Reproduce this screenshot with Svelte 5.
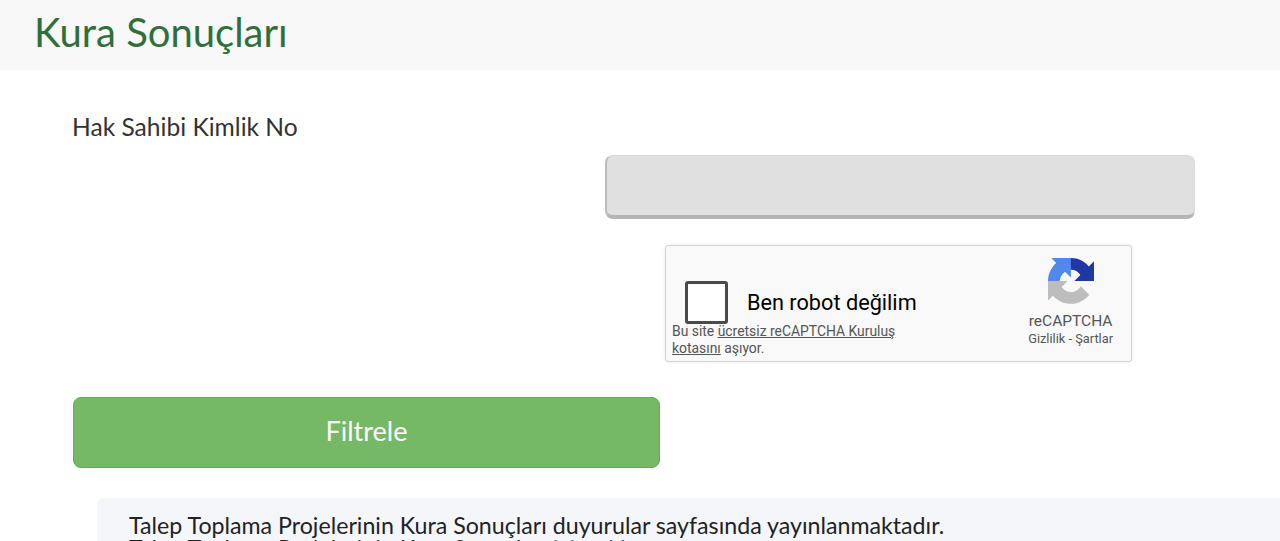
<script lang="ts">
	let identity = $state('');
	let robot = $state(false);
</script>

<div class="page">
	<header class="page__head">
		<h1>Kura Sonuçları</h1>
	</header>

	<form class="filter" onsubmit={(event) => event.preventDefault()}>
		<label class="filter__label" for="identity">Hak Sahibi Kimlik No</label>
		<input id="identity" class="filter__input" type="text" bind:value={identity} />

		<div class="captcha">
			<div class="captcha__main">
				<label class="captcha__check">
					<input type="checkbox" bind:checked={robot} />
					<span>Ben robot değilim</span>
				</label>
				<p class="captcha__note">
					Bu site <u>ücretsiz reCAPTCHA Kuruluş kotasını</u> aşıyor.
				</p>
			</div>
			<div class="captcha__brand">
				<svg viewBox="0 0 64 64" width="46" height="46" aria-hidden="true">
					<path fill="#1f38a3" d="M64 31.955l-.033-1.37V4.687l-7.16 7.16C50.948 4.674 42.033.093 32.05.093c-10.4 0-19.622 4.96-25.458 12.64l11.736 11.86a15.55 15.55 0 0 1 4.754-5.334c2.05-1.6 4.952-2.906 8.968-2.906.485 0 .86.057 1.135.163 4.976.393 9.288 3.14 11.828 7.124l-8.307 8.307 32.294.01" />
					<path fill="#5089ee" d="M31.862.001l-1.37.033H4.594l7.16 7.16C4.58 13.053 0 21.968 0 31.95c0 10.4 4.96 19.622 12.64 25.458l11.86-11.736a15.55 15.55 0 0 1-5.334-4.754c-1.6-2.05-2.906-4.952-2.906-8.968 0-.485.057-.86.163-1.135.393-4.976 3.14-9.288 7.124-11.828l8.307 8.307.01-32.294" />
					<path fill="#bdbdbd" d="M.001 31.95l.033 1.37v25.898l7.16-7.16c5.86 7.173 14.775 11.754 24.757 11.754 10.4 0 19.622-4.96 25.458-12.64l-11.736-11.86a15.55 15.55 0 0 1-4.754 5.334c-2.05 1.6-4.952 2.906-8.968 2.906-.485 0-.86-.057-1.135-.163-4.976-.393-9.288-3.14-11.828-7.124l8.307-8.307-32.294-.01" />
				</svg>
				<span class="captcha__name">reCAPTCHA</span>
				<span class="captcha__links">Gizlilik - Şartlar</span>
			</div>
		</div>

		<button class="filter__submit" type="submit">Filtrele</button>
	</form>

	<div class="notice">
		<p>Talep Toplama Projelerinin Kura Sonuçları duyurular sayfasında yayınlanmaktadır.</p>
		<p>Talep Toplama Projelerinin Kura Sonuçları <span class="notice__link">için tıklayınız.</span></p>
	</div>
</div>

<style>
	:global(body) {
		margin: 0;
		background: #fff;
	}

	.page {
		height: 100vh;
		overflow: hidden;
		font-family: Lato, "Open Sans", sans-serif;
		color: #333;
	}

	.page__head {
		height: 70px;
		padding: 0 0 6px 34px;
		box-sizing: border-box;
		display: flex;
		align-items: center;
		background: #f8f8f8;
	}

	h1 {
		margin: 0;
		font-size: 40px;
		font-weight: 400;
		color: #2f6f3a;
	}

	.filter {
		display: flex;
		flex-direction: column;
		padding: 43px 85px 0 72px;
	}

	.filter__label {
		font-size: 24.6px;
		line-height: 28px;
		color: #333;
	}

	.filter__input {
		box-sizing: border-box;
		align-self: flex-end;
		width: 590px;
		height: 64px;
		margin-top: 14px;
		border: 1px solid #d8d8d8;
		border-left: 2px solid #bcbcbc;
		border-bottom: 4px solid #b5b5b5;
		border-radius: 8px;
		background: #e0e0e0;
		outline: none;
	}

	.captcha {
		box-sizing: border-box;
		align-self: flex-end;
		display: flex;
		justify-content: space-between;
		width: 467px;
		height: 117px;
		margin: 26px 63px 0 0;
		padding: 12px 18px 0 6px;
		border: 1px solid #d3d3d3;
		border-radius: 3px;
		background: #f9f9f9;
		box-shadow: 0 0 4px rgba(0, 0, 0, 0.08);
		font-family: Roboto, Arial, sans-serif;
		color: #000;
	}

	.captcha__main {
		padding-top: 23px;
	}

	.captcha__check {
		display: flex;
		align-items: center;
		gap: 19px;
		padding-left: 13px;
		font-size: 21.7px;
		white-space: nowrap;
	}

	.captcha__check input {
		appearance: none;
		flex: none;
		box-sizing: border-box;
		width: 43px;
		height: 43px;
		margin: 0;
		border: 3px solid #4a4a4a;
		border-radius: 3px;
		background: #fff;
	}

	.captcha__note {
		width: 240px;
		margin: -1px 0 0;
		font-size: 13.9px;
		line-height: 17px;
		color: #555;
	}

	.captcha__brand {
		display: flex;
		flex-direction: column;
		align-items: center;
		color: #555;
	}

	.captcha__name {
		margin-top: 8px;
		font-size: 15.5px;
		line-height: 18px;
	}

	.captcha__links {
		margin-top: 1px;
		font-size: 12.8px;
		line-height: 15px;
	}

	.filter__submit {
		width: 587px;
		height: 71px;
		margin: 35px 0 0 1px;
		padding-bottom: 5px;
		border: 1px solid #65aa5a;
		border-radius: 8px;
		background: #75b866;
		color: #fff;
		font-family: inherit;
		font-size: 27px;
	}

	.notice {
		margin: 30px 0 0 97px;
		padding: 15.5px 32px;
		border-radius: 6px 0 0 0;
		background: #f4f6fa;
		font-size: 23.2px;
		line-height: 23px;
		color: #222;
		white-space: nowrap;
	}

	.notice p {
		margin: 0;
	}

	.notice__link {
		color: #2a5db0;
	}
</style>
